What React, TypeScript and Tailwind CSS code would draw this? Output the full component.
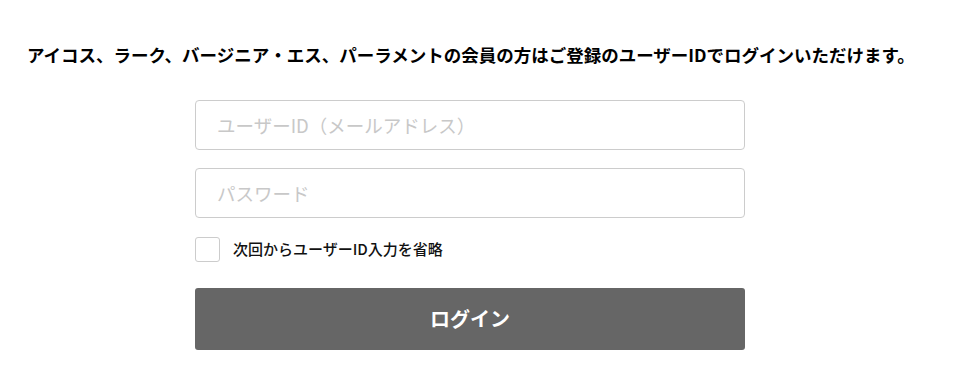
import React from "react";

export default function App() {
  const font = { fontFamily: '"Noto Sans CJK JP", "Noto Sans", sans-serif' };

  return (
    <div className="w-[963px] h-[366px] bg-white text-black" style={font}>
      <div className="pt-[42px] pl-[27px]">
        <p className="text-[17.5px] font-bold leading-[26px]">
          アイコス、ラーク、バージニア・エス、パーラメントの会員の方はご登録のユーザーIDでログインいただけます。
        </p>
      </div>

      <form className="mt-[32px] ml-[195px] w-[550px] flex flex-col">
        <input
          type="text"
          placeholder="ユーザーID（メールアドレス）"
          className="h-[50px] w-full border border-[#cccccc] rounded-[4px] px-[21px] text-[18.5px] placeholder:text-[#c8c8c8] outline-none"
        />
        <input
          type="password"
          placeholder="パスワード"
          className="mt-[18px] h-[50px] w-full border border-[#cccccc] rounded-[4px] px-[21px] text-[18.5px] placeholder:text-[#c8c8c8] outline-none"
        />
        <label className="mt-[19px] flex items-center gap-[13px]">
          <span className="w-[25px] h-[25px] border border-[#cccccc] rounded-[3px] bg-white" />
          <span className="text-[15px] font-medium text-[#111]">次回からユーザーID入力を省略</span>
        </label>
        <button
          type="button"
          className="mt-[26px] h-[62px] w-full rounded-[3px] bg-[#666666] text-white text-[20px] font-bold"
        >
          ログイン
        </button>
      </form>
    </div>
  );
}
